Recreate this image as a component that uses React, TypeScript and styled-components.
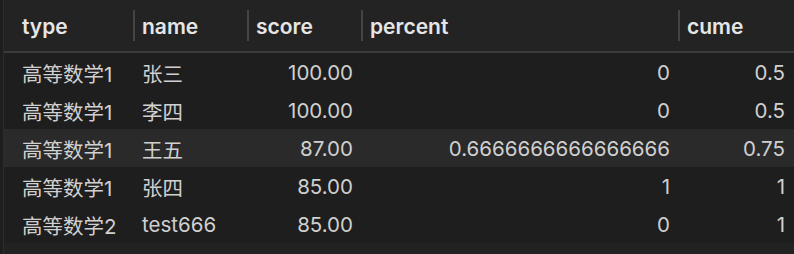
import styled, { createGlobalStyle } from "styled-components";

const GlobalStyle = createGlobalStyle`
  html, body {
    margin: 0;
    padding: 0;
    background: #1e1e1e;
  }
  body {
    font-family: Inter, "Noto Sans CJK SC", "Noto Sans", sans-serif;
    -webkit-font-smoothing: antialiased;
  }
`;

type Row = {
  type: string;
  name: string;
  score: string;
  percent: string;
  cume: string;
};

const rows: Row[] = [
  { type: "高等数学1", name: "张三", score: "100.00", percent: "0", cume: "0.5" },
  { type: "高等数学1", name: "李四", score: "100.00", percent: "0", cume: "0.5" },
  { type: "高等数学1", name: "王五", score: "87.00", percent: "0.6666666666666666", cume: "0.75" },
  { type: "高等数学1", name: "张四", score: "85.00", percent: "1", cume: "1" },
  { type: "高等数学2", name: "test666", score: "85.00", percent: "0", cume: "1" },
];

const columns = ["type", "name", "score", "percent", "cume"];

export default function App() {
  return (
    <>
      <GlobalStyle />
      <Page>
        <Table>
          <HeaderRow>
            {columns.map((c, i) => (
              <HeadCell key={c} $first={i === 0}>
                {c}
              </HeadCell>
            ))}
          </HeaderRow>
          {rows.map((r, idx) => (
            <BodyRow key={idx} $selected={idx === 2}>
              <Cell $first>{r.type}</Cell>
              <Cell>{r.name}</Cell>
              <Cell $num>{r.score}</Cell>
              <Cell $num>{r.percent}</Cell>
              <Cell $num>{r.cume}</Cell>
            </BodyRow>
          ))}
          <Filler />
        </Table>
      </Page>
    </>
  );
}

const Page = styled.div`
  width: 794px;
  height: 254px;
  padding-left: 3px;
  box-sizing: border-box;
  background: #1e1e1e;
  overflow: hidden;
`;

const Table = styled.div`
  height: 100%;
  border-left: 1px solid #2c2c2c;
  display: flex;
  flex-direction: column;
`;

const gridCols = "130px 114px 114px 317px 1fr";

const HeaderRow = styled.div`
  display: grid;
  grid-template-columns: ${gridCols};
  height: 51px;
  background: #232323;
  border-bottom: 2px solid #3b3b3b;
`;

const HeadCell = styled.div<{ $first?: boolean }>`
  position: relative;
  display: flex;
  align-items: center;
  padding-left: ${({ $first }) => ($first ? "18px" : "8px")};
  padding-top: 1px;
  font-size: 21px;
  font-weight: 600;
  color: #e6e6e6;
  &::before {
    content: "";
    display: ${({ $first }) => ($first ? "none" : "block")};
    position: absolute;
    left: -1px;
    top: 10px;
    height: 31px;
    width: 2px;
    background: #444444;
  }
`;

const BodyRow = styled.div<{ $selected?: boolean }>`
  display: grid;
  grid-template-columns: ${gridCols};
  height: 38px;
  background: ${({ $selected }) => ($selected ? "#2a2a2a" : "#1e1e1e")};
`;

const Cell = styled.div<{ $first?: boolean; $num?: boolean }>`
  display: flex;
  align-items: center;
  justify-content: ${({ $num }) => ($num ? "flex-end" : "flex-start")};
  padding-left: ${({ $first }) => ($first ? "18px" : "8px")};
  padding-right: 9px;
  padding-top: 1px;
  font-size: 20.5px;
  color: #d0d0d0;
  white-space: nowrap;
`;

const Filler = styled.div`
  flex: 1;
  background: #222222;
`;
